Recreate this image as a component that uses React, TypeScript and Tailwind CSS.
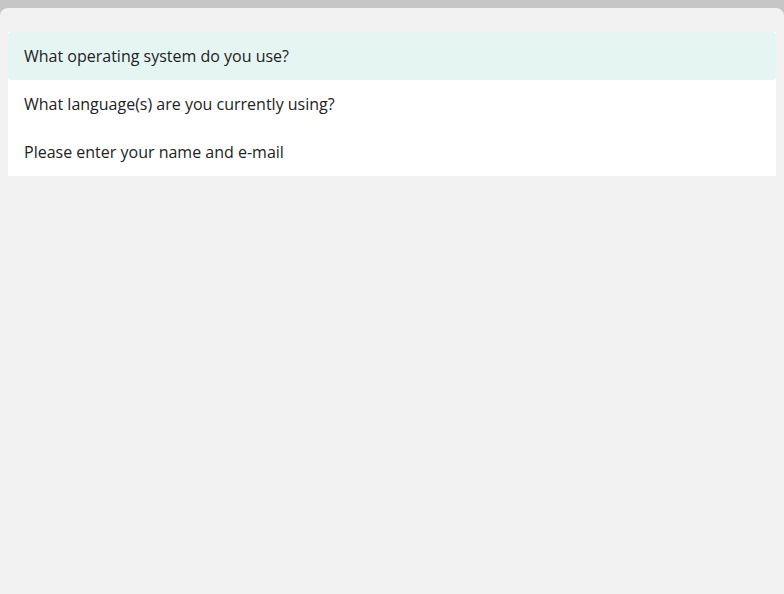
const questions = [
  'What operating system do you use?',
  'What language(s) are you currently using?',
  'Please enter your name and e-mail',
]

export default function App() {
  return (
    <div className="h-[594px] w-[784px] bg-[#c6c6c6] pt-2" style={{ fontFamily: '"Open Sans", sans-serif' }}>
      <div className="h-full rounded-t-lg bg-[#f2f2f2] px-2 pt-6">
        <ul className="bg-white">
          {questions.map((q, i) => (
            <li
              key={q}
              className={
                i === 0
                  ? 'flex h-12 items-center rounded bg-[#e5f6f2] px-4 text-base text-[#222]'
                  : 'flex h-12 items-center px-4 text-base text-[#222]'
              }
            >
              {q}
            </li>
          ))}
        </ul>
      </div>
    </div>
  )
}
